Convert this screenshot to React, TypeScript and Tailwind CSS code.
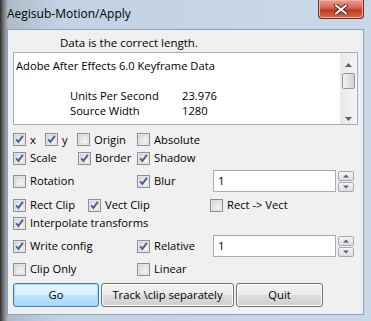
import React from "react";

const font = "font-['Segoe_UI','Open_Sans',sans-serif] text-[11.2px] text-black";

function Check({ on }: { on?: boolean }) {
  return (
    <svg width="13" height="13" viewBox="0 0 13 13" className="shrink-0">
      <defs>
        <linearGradient id="cbg" x1="0" y1="0" x2="1" y2="1">
          <stop offset="0" stopColor="#d9d9d9" />
          <stop offset="1" stopColor="#fbfbfb" />
        </linearGradient>
      </defs>
      <rect x="0.5" y="0.5" width="12" height="12" fill="#f4f4f4" stroke="#8e8f8f" />
      <rect x="2" y="2" width="9" height="9" fill="url(#cbg)" stroke="#c3c3c3" strokeWidth="0.6" />
      {on && <path d="M3.2 6.3 L5.4 8.9 L9.9 2.9" fill="none" stroke="#4a5e98" strokeWidth="1.9" />}
    </svg>
  );
}

function Box({ label, on, w }: { label: string; on?: boolean; w?: string }) {
  return (
    <div className={`flex items-center gap-[4px] ${w ?? ""}`}>
      <Check on={on} />
      <span className="leading-none">{label}</span>
    </div>
  );
}

function Spin() {
  return (
    <div className="flex items-center gap-[2px]">
      <div className="flex h-[22px] w-[123px] items-center border border-[#abadb3] border-t-[#a1a5ad] bg-white px-[4px] text-[11.5px]">1</div>
      <div className="flex flex-col gap-[1px]">
        {["M5 6.5 L8 3.5 L11 6.5Z", "M5 3.5 L8 6.5 L11 3.5Z"].map((d) => (
          <svg key={d} width="16" height="10" viewBox="0 0 16 10">
            <defs>
              <linearGradient id="spg" x1="0" y1="0" x2="0" y2="1">
                <stop offset="0" stopColor="#f7f7f7" />
                <stop offset="1" stopColor="#dcdcdc" />
              </linearGradient>
            </defs>
            <rect x="0.5" y="0.5" width="15" height="9" rx="1.5" fill="url(#spg)" stroke="#a9a9a9" />
            <path d={d} fill="#4d6185" />
          </svg>
        ))}
      </div>
    </div>
  );
}

function Btn({ children, def, w }: { children: React.ReactNode; def?: boolean; w: string }) {
  return (
    <button
      className={`${w} h-[24px] rounded-[3px] border ${
        def
          ? "border-[#3c7fb1] bg-[linear-gradient(#eaf6fd,#d9f0fc_50%,#bee6fd_51%,#a7d9f5)] shadow-[inset_0_0_0_1px_#a6d8f5]"
          : "border-[#707070] bg-[linear-gradient(#f2f2f2,#ebebeb_50%,#dddddd_51%,#cfcfcf)] shadow-[inset_0_0_0_1px_#fcfcfc]"
      }`}
    >
      {children}
    </button>
  );
}

export default function App() {
  return (
    <div className={`${font} flex h-[321px] w-[371px] flex-col bg-[linear-gradient(90deg,#2e2e2e_0px,#6c6c6c_3px,#aebcca_8px,#c2d2e3_60px,#cad9ea_100%)] pb-[6px] pl-[7px] pr-[7px]`}>
      <div className="flex h-[29px] shrink-0 items-start justify-between">
        <span className="mt-[8px] text-[12px] leading-none">Aegisub-Motion/Apply</span>
        <div className="flex h-[19px] w-[46px] items-center justify-center rounded-b-[4px] border border-t-0 border-[#6d2a22] bg-[linear-gradient(#e8a093,#d4644f_45%,#c2391f_55%,#d86b4c)] shadow-[inset_0_0_0_1px_#f0b3a4]">
          <svg width="14" height="11" viewBox="0 0 14 11">
            <path d="M2 1.5 L12 9.5 M12 1.5 L2 9.5" stroke="#5a2017" strokeWidth="4" strokeLinecap="round" />
            <path d="M2 1.5 L12 9.5 M12 1.5 L2 9.5" stroke="#ffffff" strokeWidth="2.2" strokeLinecap="round" />
          </svg>
        </div>
      </div>
      <div className="flex flex-1 flex-col border border-[#8aa3bd] bg-[#f0f0f0] px-[5px] pt-[5px] pb-[6px]">
        <div className="h-[16px] pl-[47px] text-[11.5px] leading-[16px]">Data is the correct length.</div>
        <div className="mt-[1px] flex h-[73px] border border-[#abadb3] bg-white">
          <div className="flex-1 pl-[2px] pt-[5px] leading-[15px]">
            <div>Adobe After Effects 6.0 Keyframe Data</div>
            <div>&nbsp;</div>
            <div className="flex"><span className="ml-[54px] w-[112px]">Units Per Second</span><span>23.976</span></div>
            <div className="flex"><span className="ml-[54px] w-[112px]">Source Width</span><span>1280</span></div>
          </div>
          <div className="flex w-[17px] flex-col items-center bg-[linear-gradient(90deg,#e8e8e8,#f5f5f5)] pb-[3px] pt-[10px]">
            <svg width="7" height="4" viewBox="0 0 7 4"><path d="M0 4 L3.5 0 L7 4Z" fill="#606060" /></svg>
            <div className="mt-[6px] h-[16px] w-[13px] rounded-[2px] border border-[#979797] bg-[linear-gradient(90deg,#f3f3f3,#e2e2e2_50%,#d2d2d2)]" />
            <div className="flex-1" />
            <svg width="7" height="4" viewBox="0 0 7 4"><path d="M0 0 L3.5 4 L7 0Z" fill="#606060" /></svg>
          </div>
        </div>
        <div className="mt-[6px] flex h-[17px] items-center">
          <Box label="x" on w="w-[32px]" />
          <Box label="y" on w="w-[32px]" />
          <Box label="Origin" w="w-[60px]" />
          <Box label="Absolute" />
        </div>
        <div className="mt-[1px] flex h-[18px] items-center">
          <Box label="Scale" on w="w-[65px]" />
          <Box label="Border" on w="w-[59px]" />
          <Box label="Shadow" on />
        </div>
        <div className="mt-[3px] flex h-[22px] items-center">
          <Box label="Rotation" w="w-[124px]" />
          <Box label="Blur" on w="w-[76px]" />
          <Spin />
        </div>
        <div className="mt-[5px] flex h-[16px] items-center">
          <Box label="Rect Clip" on w="w-[75px]" />
          <Box label="Vect Clip" on w="w-[122px]" />
          <Box label="Rect -> Vect" />
        </div>
        <div className="mt-[2px] flex h-[16px] items-center">
          <Box label="Interpolate transforms" on />
        </div>
        <div className="mt-[4px] flex h-[22px] items-center">
          <Box label="Write config" on w="w-[124px]" />
          <Box label="Relative" on w="w-[76px]" />
          <Spin />
        </div>
        <div className="mt-[4px] flex h-[16px] items-center">
          <Box label="Clip Only" w="w-[124px]" />
          <Box label="Linear" />
        </div>
        <div className="mt-[6px] flex gap-[2px]">
          <Btn def w="w-[86px]">Go</Btn>
          <Btn w="w-[133px]">Track \clip separately</Btn>
          <Btn w="w-[87px]">Quit</Btn>
        </div>
      </div>
    </div>
  );
}
